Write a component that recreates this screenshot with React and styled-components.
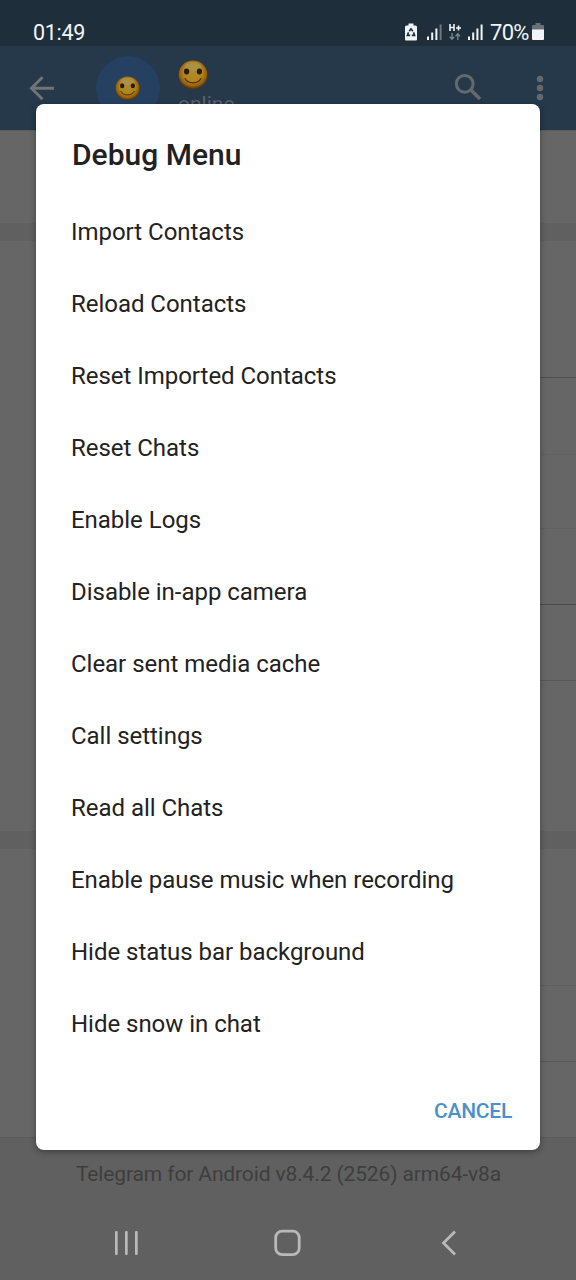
import React from 'react';
import styled, { createGlobalStyle } from 'styled-components';

const GlobalStyle = createGlobalStyle`
  * { box-sizing: border-box; }

  body {
    margin: 0;
    font-family: Roboto, 'Liberation Sans', sans-serif;
    background-color: #606060;
  }
`;

const Screen = styled.div`
  width: 576px;
  height: 1280px;
  display: flex;
  flex-direction: column;
  overflow: hidden;
  background-color: #606060;
`;

const StatusBar = styled.div`
  height: 46px;
  flex-shrink: 0;
  display: flex;
  align-items: center;
  justify-content: space-between;
  padding: 19px 32px 0 33px;
  background-color: #1e2e3b;
  color: #f1f5f7;
`;

const Clock = styled.span`
  font-size: 21.5px;
  line-height: 26px;
  letter-spacing: -0.3px;
`;

const StatusIcons = styled.div`
  display: flex;
  align-items: center;

  svg {
    margin-bottom: 2px;
  }
`;

const Network = styled.div`
  display: flex;
  align-items: center;
  gap: 7px;
  margin-left: 10px;
`;

const Percent = styled.span`
  font-size: 22px;
  line-height: 26px;
  letter-spacing: -0.7px;
  margin-left: 7px;
  width: 42px;
  white-space: nowrap;
`;

const Header = styled.div`
  height: 85px;
  flex-shrink: 0;
  display: flex;
  padding: 0 32px 0 24px;
  background-color: #25394a;
  border-bottom: 1px solid #5a5d5f;
`;

const BackIcon = styled.svg`
  margin: 28px 0 0 4px;
`;

const Avatar = styled.div`
  width: 64px;
  height: 64px;
  margin: 10px 0 0 40px;
  padding: 1px 1px 0 0;
  border-radius: 50%;
  display: flex;
  align-items: center;
  justify-content: center;
  background-color: #254061;
`;

const User = styled.div`
  flex: 1;
  margin-left: 18px;
  padding-top: 14px;
  display: flex;
  flex-direction: column;
`;

const Online = styled.span`
  margin-top: 1px;
  font-size: 21px;
  line-height: 26px;
  color: #59636c;
`;

const SearchIcon = styled.svg`
  margin: 27px 0 0 0;
`;

const MoreIcon = styled.svg`
  margin: 29px 0 0 54px;
`;

const Section = styled.div`
  flex-shrink: 0;
  margin-bottom: ${(props) => props.$gap || 0}px;
  background-color: #666666;
`;

// dividers are inset from the left, under the row text
const Row = styled.div`
  height: ${(props) => props.$height}px;
  margin-left: 40px;
  border-bottom: 1px solid ${(props) => props.$line || 'transparent'};
`;

const Version = styled.div`
  flex-shrink: 0;
  height: 69px;
  padding: 23px 0 0 1px;
  border-top: 1px solid #5b5b5b;
  text-align: center;
  font-size: 21px;
  line-height: 26px;
  letter-spacing: -0.13px;
  color: #3e3e3e;
`;

const NavBar = styled.div`
  height: 74px;
  display: flex;
  justify-content: space-between;
  align-items: center;
  padding: 0 112px 0 112px;
`;

const Dialog = styled.div`
  position: absolute;
  top: 104px;
  left: 36px;
  width: 504px;
  height: 1046px;
  display: flex;
  flex-direction: column;
  border-radius: 8px;
  background-color: #ffffff;
  box-shadow: 0 2px 6px rgba(0, 0, 0, 0.35);
`;

const Title = styled.h1`
  margin: 0;
  padding: 33px 36px 0;
  height: 92px;
  font-size: 30px;
  line-height: 36px;
  font-weight: 500;
  color: #212121;
`;

const Item = styled.div`
  height: 72px;
  padding: 0 35px;
  font-size: 24px;
  line-height: 72px;
  letter-spacing: -0.03px;
  white-space: nowrap;
  color: #222222;
`;

const Cancel = styled.button`
  align-self: flex-end;
  margin: 24px 16px 0 0;
  padding: 0 12px;
  height: 54px;
  border: none;
  background: none;
  font-family: inherit;
  font-size: 21px;
  font-weight: 500;
  letter-spacing: -0.25px;
  color: #4991cc;
`;

const items = [
  'Import Contacts',
  'Reload Contacts',
  'Reset Imported Contacts',
  'Reset Chats',
  'Enable Logs',
  'Disable in-app camera',
  'Clear sent media cache',
  'Call settings',
  'Read all Chats',
  'Enable pause music when recording',
  'Hide status bar background',
  'Hide snow in chat',
];

const Smiley = ({ size, id }) => (
  <svg width={size} height={size} viewBox="0 0 30 30">
    <defs>
      <radialGradient id={id} cx="50%" cy="42%" r="56%">
        <stop offset="0" stopColor="#ac8c2c" />
        <stop offset="0.6" stopColor="#b0831a" />
        <stop offset="0.85" stopColor="#935d09" />
        <stop offset="1" stopColor="#4d3210" />
      </radialGradient>
    </defs>
    <circle cx="15" cy="15" r="14.4" fill={`url(#${id})`} />
    <ellipse cx="15" cy="6.5" rx="8.5" ry="4.5" fill="#aa9c68" opacity="0.5" />
    <ellipse cx="8.6" cy="11.6" rx="2.6" ry="3" fill="#2b1a0b" />
    <ellipse cx="21.4" cy="11.6" rx="2.6" ry="3" fill="#2b1a0b" />
    <path d="M7 18.5c3.2 5.8 12.8 5.8 16 0" fill="none" stroke="#4a2d0a" strokeWidth="1.2" strokeLinecap="round" />
  </svg>
);

const Signal = ({ weak }) => (
  <svg width="15" height="16" viewBox="0 0 15 16" fill="#f1f5f7">
    <rect x="0" y="12.5" width="2" height="3.5" />
    <rect x="4.2" y="8.5" width="2" height="7.5" />
    <rect x="8.4" y="4.5" width="2" height="11.5" />
    <rect x="12.6" y="0.5" width="2" height="15.5" fill={weak ? '#6c7882' : '#f1f5f7'} />
  </svg>
);

const Saver = () => (
  <svg width="12" height="18" viewBox="0 0 12 18">
    <path d="M3.5 0.5h5v2h2q1.5 0 1.5 1.5v12.5q0 1-1 1H1q-1 0-1-1V4q0-1.5 1.5-1.5h2z" fill="#f1f5f7" />
    <g fill="none" stroke="#1e2e3b" strokeWidth="1.6">
      <path d="M4.2 8.2L6 5.8l1.8 2.4" />
      <path d="M3.5 9.4L2.4 12.4h2.8" />
      <path d="M8.5 9.4l1.1 3H6.8" />
    </g>
  </svg>
);

const Data = () => (
  <svg width="12" height="18" viewBox="0 0 12 18" fill="none">
    <path d="M1 1v7M5 1v7M1 4.5h4M7 5h5M9.5 2.5v5" stroke="#f1f5f7" strokeWidth="1.6" />
    <path d="M3 10v6M0.8 13.8L3 16.2l2.2-2.4M8.8 17v-6M6.6 13.2l2.2-2.4 2.2 2.4" stroke="#7b8790" strokeWidth="1.3" />
  </svg>
);

const Battery = () => (
  <svg width="12" height="17" viewBox="0 0 12 17">
    <path d="M3.5 0h5v2H11q1 0 1 1v4H0V3q0-1 1-1h2.5z" fill="#67717a" />
    <path d="M0 6.5h12V16q0 1-1 1H1q-1 0-1-1z" fill="#f1f5f7" />
  </svg>
);

const App = () => {
  return (
    <>
      <GlobalStyle />
      <Screen>
        <StatusBar>
          <Clock>01:49</Clock>
          <StatusIcons>
            <Saver />
            <Network>
              <Signal weak />
              <Data />
              <Signal />
            </Network>
            <Percent>70%</Percent>
            <Battery />
          </StatusIcons>
        </StatusBar>

        <Header>
          <BackIcon width="28" height="28" viewBox="0 0 28 28" fill="none" stroke="#707477" strokeWidth="3">
            <path d="M26 14.2H4M14.5 3.2l-11 11 11 11" />
          </BackIcon>
          <Avatar>
            <Smiley size={25} id="avatarFace" />
          </Avatar>
          <User>
            <Smiley size={30} id="nameFace" />
            <Online>online</Online>
          </User>
          <SearchIcon width="28" height="28" viewBox="0 0 28 28" fill="none" stroke="#65696c" strokeWidth="3">
            <circle cx="10.7" cy="10.8" r="8.4" />
            <path d="M17 17l9 9" strokeWidth="3.6" />
          </SearchIcon>
          <MoreIcon width="8" height="26" viewBox="0 0 8 26" fill="#65696c">
            <circle cx="4" cy="4" r="3.2" />
            <circle cx="4" cy="13" r="3.2" />
            <circle cx="4" cy="22" r="3.2" />
          </MoreIcon>
        </Header>

        <Section $gap={18}>
          <Row $height={92} />
        </Section>
        <Section $gap={18}>
          <Row $height={137} $line="#4f4f4f" />
          <Row $height={77} $line="#606060" />
          <Row $height={74} $line="#606060" />
          <Row $height={76} $line="#4a4a4a" />
          <Row $height={76} $line="#575757" />
          <Row $height={150} />
        </Section>
        <Section>
          <Row $height={137} $line="#5e5e5e" />
          <Row $height={76} $line="#585858" />
          <Row $height={75} />
        </Section>

        <Version>Telegram for Android v8.4.2 (2526) arm64-v8a</Version>

        <NavBar>
          <svg width="28" height="28" viewBox="0 0 28 28" fill="#b9b9b9">
            <rect x="3" y="2" width="2.7" height="24" rx="1" />
            <rect x="13" y="2" width="2.7" height="24" rx="1" />
            <rect x="23" y="2" width="2.7" height="24" rx="1" />
          </svg>
          <svg width="28" height="28" viewBox="0 0 28 28" fill="none" stroke="#b9b9b9" strokeWidth="2.8">
            <rect x="1.7" y="2.2" width="23.5" height="23.5" rx="6.5" />
          </svg>
          <svg width="28" height="28" viewBox="0 0 28 28" fill="none" stroke="#b9b9b9" strokeWidth="2.8">
            <path d="M19 2.5L7.5 14 19 25.5" />
          </svg>
        </NavBar>
      </Screen>

      <Dialog>
        <Title>Debug Menu</Title>
        {items.map((item) => (
          <Item key={item}>{item}</Item>
        ))}
        <Cancel>CANCEL</Cancel>
      </Dialog>
    </>
  );
};

export default App;
